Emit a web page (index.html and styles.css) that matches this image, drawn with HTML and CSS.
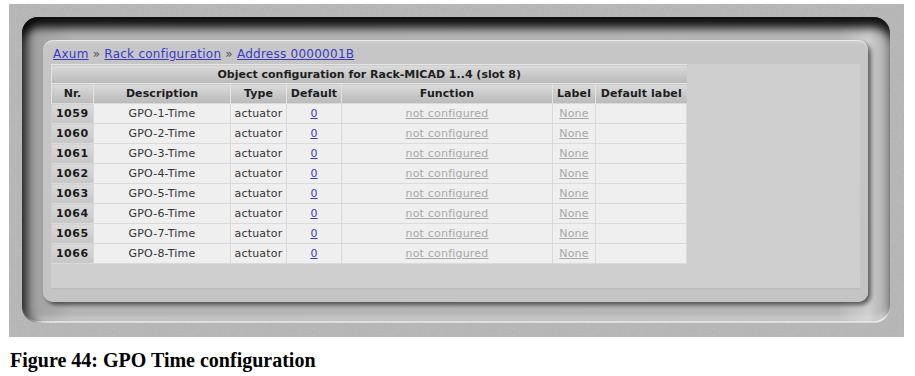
FILE: index.html
```html
<!DOCTYPE html>
<html>
<head>
<meta charset="utf-8">
<link rel="stylesheet" href="styles.css">
</head>
<body>
<div class="shot">
  <div class="bezel">
    <div class="panel">
      <div class="crumbs"><a href="#">Axum</a> » <a href="#">Rack configuration</a> » <a href="#">Address 0000001B</a></div>
      <div class="box">
        <table class="cfg">
          <colgroup>
            <col class="c-nr"><col class="c-desc"><col class="c-type"><col class="c-def"><col class="c-fn"><col class="c-lbl"><col class="c-dlbl">
          </colgroup>
          <thead>
            <tr><th colspan="7" class="title">Object configuration for Rack-MICAD 1..4 (slot 8)</th></tr>
            <tr><th>Nr.</th><th>Description</th><th>Type</th><th>Default</th><th>Function</th><th>Label</th><th>Default label</th></tr>
          </thead>
          <tbody>
            <tr><th class="nr">1059</th><td>GPO-1-Time</td><td>actuator</td><td><a href="#">0</a></td><td><a class="off" href="#">not configured</a></td><td><a class="off" href="#">None</a></td><td></td></tr>
            <tr><th class="nr">1060</th><td>GPO-2-Time</td><td>actuator</td><td><a href="#">0</a></td><td><a class="off" href="#">not configured</a></td><td><a class="off" href="#">None</a></td><td></td></tr>
            <tr><th class="nr">1061</th><td>GPO-3-Time</td><td>actuator</td><td><a href="#">0</a></td><td><a class="off" href="#">not configured</a></td><td><a class="off" href="#">None</a></td><td></td></tr>
            <tr><th class="nr">1062</th><td>GPO-4-Time</td><td>actuator</td><td><a href="#">0</a></td><td><a class="off" href="#">not configured</a></td><td><a class="off" href="#">None</a></td><td></td></tr>
            <tr><th class="nr">1063</th><td>GPO-5-Time</td><td>actuator</td><td><a href="#">0</a></td><td><a class="off" href="#">not configured</a></td><td><a class="off" href="#">None</a></td><td></td></tr>
            <tr><th class="nr">1064</th><td>GPO-6-Time</td><td>actuator</td><td><a href="#">0</a></td><td><a class="off" href="#">not configured</a></td><td><a class="off" href="#">None</a></td><td></td></tr>
            <tr><th class="nr">1065</th><td>GPO-7-Time</td><td>actuator</td><td><a href="#">0</a></td><td><a class="off" href="#">not configured</a></td><td><a class="off" href="#">None</a></td><td></td></tr>
            <tr><th class="nr">1066</th><td>GPO-8-Time</td><td>actuator</td><td><a href="#">0</a></td><td><a class="off" href="#">not configured</a></td><td><a class="off" href="#">None</a></td><td></td></tr>
          </tbody>
        </table>
      </div>
    </div>
  </div>
</div>
<p class="caption">Figure 44: GPO Time configuration</p>
</body>
</html>
```
FILE: styles.css
```css
html, body { margin: 0; padding: 0; background: #fff; }
body { width: 915px; height: 376px; overflow: hidden; }

.shot {
  margin: 4px 0 0 9px;
  width: 895px;
  height: 333px;
  box-sizing: border-box;
  padding: 13px 14px 14px 13px;
  background-color: #b6b6b6;
  background-image:
    url("data:image/svg+xml;utf8,<svg xmlns='http://www.w3.org/2000/svg' width='200' height='200'><filter id='n'><feTurbulence type='fractalNoise' baseFrequency='0.9' numOctaves='2' stitchTiles='stitch'/><feColorMatrix type='saturate' values='0'/></filter><rect width='200' height='200' filter='url(%23n)' opacity='0.22'/></svg>");
}

.bezel {
  height: 100%;
  box-sizing: border-box;
  border-radius: 16px;
  padding: 23px 22px 21px 21px;
  background: linear-gradient(to right, #9a9a9a 0%, #b4b4b4 6%, #b8b8b8 94%, #cfcfcf 97.5%, #a8a8a8 100%);
  box-shadow:
    inset 0 13px 10px -2px rgba(0,0,0,0.9),
    inset 9px 0 9px -3px rgba(0,0,0,0.6),
    inset 0 -2px 0 rgba(255,255,255,0.9),
    inset 0 -6px 5px rgba(255,255,255,0.35);
}

.panel {
  height: 100%;
  box-sizing: border-box;
  border-radius: 10px;
  background: linear-gradient(#d2d2d2 0, #c6c6c6 6px, #c4c4c4 100%);
  box-shadow: 3px 3px 4px rgba(0,0,0,0.55), inset 0 1px 0 rgba(255,255,255,0.5);
  padding: 0 8px 13px 8px;
  display: flex;
  flex-direction: column;
}

.crumbs {
  font-family: "DejaVu Sans", Verdana, sans-serif;
  font-size: 12px;
  line-height: 22px;
  height: 24px;
  box-sizing: border-box;
  padding: 3px 0 0 2px;
  color: #555;
  letter-spacing: 0.25px;
}
.crumbs a { color: #3a3ac8; text-decoration: underline; }

.box {
  flex: 1;
  background: #cfcfcf;
  border-bottom: 1px solid #bdbdbd;
}

.cfg {
  table-layout: fixed;
  width: 635px;
  border-collapse: collapse;
  font-family: "DejaVu Sans", Verdana, sans-serif;
  font-size: 11px;
  color: #333;
}
.c-nr { width: 42px; }
.c-desc { width: 137px; }
.c-type { width: 56px; }
.c-def { width: 55px; }
.c-fn { width: 211px; }
.c-lbl { width: 43px; }
.c-dlbl { width: 91px; }

.cfg th, .cfg td {
  padding: 0;
  text-align: center;
  white-space: nowrap;
  overflow: hidden;
}
.cfg thead th {
  height: 19px;
  font-weight: bold;
  color: #1e1e1e;
  background: linear-gradient(#dcdcdc, #c6c6c6 60%, #bababa);
  border-left: 1px solid #e2e2e2;
  border-top: 1px solid #e6e6e6;
  letter-spacing: 0.1px;
}
.cfg thead th.title { height: 18px; letter-spacing: 0; }
.cfg tbody td {
  height: 19px;
  background: #efefef;
  border: 1px solid #dadada;
  letter-spacing: 0.2px;
}
.cfg tbody th.nr {
  height: 19px;
  font-weight: bold;
  color: #1a1a1a;
  background: linear-gradient(#dadada, #c6c6c6);
  border: 1px solid #dadada;
  border-left: none;
  letter-spacing: 0.5px;
}
.cfg a { color: #3a3ab8; text-decoration: underline; }
.cfg a.off { color: #a8a8a8; }

.caption {
  margin: 12px 0 0 10px;
  font-family: "Liberation Serif", "Times New Roman", serif;
  font-weight: bold;
  font-size: 20px;
  line-height: 22px;
  color: #000;
}
```
